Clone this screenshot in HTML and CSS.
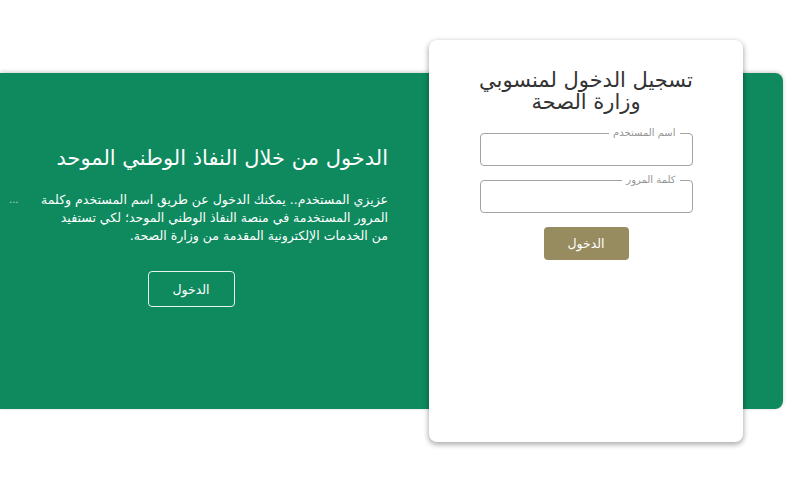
FILE: index.html
```html
<!DOCTYPE html>
<html lang="ar" dir="rtl">
<head>
  <meta charset="UTF-8">
  <title>تسجيل الدخول - وزارة الصحة</title>
  <link rel="stylesheet" href="styles.css">
</head>
<body>
  <div class="stage">
    <div class="band">
      <div class="nafath">
        <h2>الدخول من خلال النفاذ الوطني الموحد</h2>
        <p><span class="more">...</span>عزيزي المستخدم.. يمكنك الدخول عن طريق اسم المستخدم وكلمة المرور المستخدمة في منصة النفاذ الوطني الموحد؛ لكي تستفيد<br>من الخدمات الإلكترونية المقدمة من وزارة الصحة.</p>
        <button class="btn-outline">الدخول</button>
      </div>
    </div>
    <div class="login-card">
      <h1>تسجيل الدخول لمنسوبي وزارة الصحة</h1>
      <form class="login-form" onsubmit="return false;">
        <div class="field">
          <label for="user">اسم المستخدم</label>
          <input type="text" id="user">
        </div>
        <div class="field">
          <label for="pass">كلمة المرور</label>
          <input type="password" id="pass">
        </div>
        <button type="submit" class="btn-gold">الدخول</button>
      </form>
    </div>
  </div>
</body>
</html>
```

FILE: styles.css
```css
body {
  margin: 0;
  background-color: #ffffff;
  font-family: "DejaVu Sans", sans-serif;
}

.stage {
  display: grid;
  padding: 40px 0 58px;
}

.band,
.login-card {
  grid-area: 1 / 1;
}

.band {
  justify-self: start;
  margin: 33px 17px 0 0;
  width: 783px;
  height: 336px;
  box-sizing: border-box;
  padding-right: 395px;
  background-color: #0e8a5e;
  border-radius: 0 8px 8px 0;
  box-shadow: 0 -1px 4px rgba(0, 0, 0, 0.2);
}

.login-card {
  justify-self: start;
  margin-right: 57px;
  width: 314px;
  height: 402px;
  box-sizing: border-box;
  padding: 29px 50px 0;
  background-color: #ffffff;
  border-radius: 8px;
  box-shadow: 0 2px 5px 1px rgba(0, 0, 0, 0.3);
  text-align: center;
}

.login-card h1 {
  margin: 0;
  font-size: 21px;
  line-height: 22px;
  font-weight: normal;
  color: #333333;
}

.login-form {
  margin-top: 20px;
  display: flex;
  flex-direction: column;
  align-items: center;
  gap: 14px;
}

.field {
  position: relative;
  width: 213px;
  height: 33px;
  box-sizing: border-box;
  border: 1px solid #a3a3a3;
  border-radius: 4px;
}

.field label {
  position: absolute;
  top: -8px;
  right: 12px;
  padding: 0 4px;
  background-color: #ffffff;
  font-size: 10px;
  line-height: 13px;
  color: #949494;
}

.field input {
  width: 100%;
  height: 100%;
  box-sizing: border-box;
  border: none;
  background: transparent;
  outline: none;
}

.btn-gold {
  width: 85px;
  height: 33px;
  border: none;
  border-radius: 4px;
  background-color: #978b60;
  color: #ffffff;
  font-family: "DejaVu Sans", sans-serif;
  font-size: 12.5px;
  cursor: pointer;
}

.nafath {
  width: 388px;
  box-sizing: border-box;
  padding: 72px 0 0 32px;
  color: #ffffff;
  text-align: center;
}

.nafath h2 {
  margin: 0 0 20px;
  font-size: 21px;
  line-height: 26px;
  font-weight: normal;
  text-align: right;
}

.nafath p {
  margin: 0;
  font-size: 12.5px;
  line-height: 18px;
  text-align: right;
}

.nafath .more {
  float: left;
  margin-left: -23px;
  font-size: 10px;
  color: #c8d8d0;
}

.btn-outline {
  margin: 26px 0 0 -38px;
  width: 87px;
  height: 36px;
  border: 1px solid #e6f2ec;
  border-radius: 4px;
  background: transparent;
  color: #ffffff;
  font-family: "DejaVu Sans", sans-serif;
  font-size: 12.5px;
  cursor: pointer;
}
```
